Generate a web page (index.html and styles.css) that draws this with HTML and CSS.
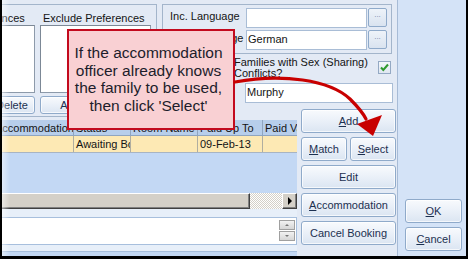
FILE: index.html
```html
<!DOCTYPE html>
<html>
<head>
<meta charset="utf-8">
<title>Booking</title>
<link rel="stylesheet" href="styles.css">
</head>
<body>
<div class="frame">
  <div class="main">
    <section class="prefs">
      <div class="prefs-inner">
        <div class="pref-col">
          <div class="pref-label">Include Preferences</div>
          <div class="listbox"></div>
          <div class="pref-btns"><div class="btn btn-add">Add</div><div class="btn btn-del">Delete</div></div>
        </div>
        <div class="pref-col">
          <div class="pref-label">Exclude Preferences</div>
          <div class="listbox"></div>
          <div class="pref-btns"><div class="btn btn-add">Add</div><div class="btn btn-del">Delete</div></div>
        </div>
      </div>
    </section>

    <section class="details">
      <div class="group">
        <div class="field-row"><span class="flabel">Inc. Language</span><div class="tbox"></div><div class="dots">...</div></div>
        <div class="field-row"><span class="flabel">Exc. Language</span><div class="tbox">German</div><div class="dots">...</div></div>
      </div>
      <div class="check-row">
        <div class="check-label">Families with Sex (Sharing)<br>Conflicts?</div>
        <div class="checkbox"><svg width="11" height="11" viewBox="0 0 11 11"><path d="M2 5.5 L4.3 8 L9 2.5" fill="none" stroke="#2f9a2f" stroke-width="2"/></svg></div>
      </div>
      <div class="family-row"><span class="flabel">Family</span><div class="tbox wide">Murphy</div></div>
    </section>

    <section class="actions">
      <div class="btn"><u>A</u>dd</div>
      <div class="pair"><div class="btn"><u>M</u>atch</div><div class="btn"><u>S</u>elect</div></div>
      <div class="btn">Edit</div>
      <div class="btn"><u>A</u>ccommodation</div>
      <div class="btn">Cancel Booking</div>
    </section>

    <section class="bookings">
      <div class="grid">
        <div class="grid-head">
          <div class="cell">Accommodation</div>
          <div class="cell">Status</div>
          <div class="cell">Room Name</div>
          <div class="cell">Paid Up To</div>
          <div class="cell">Paid Value</div>
        </div>
        <div class="grid-row">
          <div class="cell"></div>
          <div class="cell">Awaiting Booking</div>
          <div class="cell"></div>
          <div class="cell">09-Feb-13</div>
          <div class="cell"></div>
        </div>
      </div>
      <div class="hscroll">
        <div class="thumb"></div>
        <div class="track"></div>
        <div class="arrow-btn"><span class="tri-right"></span></div>
      </div>
      <div class="band"></div>
      <div class="notes">
        <div class="spin">
          <div class="spin-btn"><span class="tri-up"></span></div>
          <div class="spin-btn"><span class="tri-down"></span></div>
        </div>
      </div>
      <div class="band small"></div>
      <div class="base"></div>
    </section>
  </div>

  <aside class="dialog-btns">
    <div class="btn"><u>O</u>K</div>
    <div class="btn"><u>C</u>ancel</div>
  </aside>
</div>

<div class="fade"></div>

<div class="callout">If the accommodation<br>officer already knows<br>the family to be used,<br>then click 'Select'</div>

<svg class="arrow" width="468" height="259" viewBox="0 0 468 259">
  <path d="M235 82 C 282 73, 330 80, 350 99 C 358 107, 363 113, 366 119" fill="none" stroke="#c80000" stroke-width="3.2" stroke-linecap="round"/>
  <polygon points="357,124 382,115 373,136" fill="#c80000"/>
</svg>
</body>
</html>
```

FILE: styles.css
```css
* { box-sizing: border-box; }
html, body { margin: 0; padding: 0; }
body {
  width: 468px;
  height: 259px;
  position: relative;
  overflow: hidden;
  background: #000;
  font-family: "Liberation Sans", Arial, sans-serif;
  font-size: 11px;
  color: #141414;
}

.frame {
  display: flex;
  width: 468px;
  height: 259px;
  border-left: 2px solid #000;
  border-right: 2px solid #000;
  border-bottom: 3px solid #000;
  overflow: hidden;
  background: #e3eaf5;
}

.main {
  width: 395px;
  display: grid;
  grid-template-columns: 155px 5px 135px 3px 97px;
  grid-template-rows: 105px 12px 139px;
  background: #e3eaf5;
}

/* ---------- buttons ---------- */
.btn {
  display: flex;
  align-items: center;
  justify-content: center;
  height: 24px;
  border: 1px solid #8faaca;
  border-radius: 3px;
  background: linear-gradient(#f8fafd 0%, #eaf0f8 50%, #dbe5f2 100%);
  box-shadow: inset 0 0 0 1px rgba(255,255,255,0.7);
  color: #1c3050;
  white-space: nowrap;
}
.btn u { text-decoration: underline; text-underline-offset: 1px; }

/* ---------- preferences ---------- */
.prefs {
  grid-column: 1;
  grid-row: 1 / 3;
  margin-top: 4px;
  border-top: 1px solid #a3b5cb;
  border-right: 1px solid #a3b5cb;
  border-bottom: 1px solid #a3b5cb;
  padding-top: 7px;
  overflow: hidden;
}
.prefs-inner {
  display: flex;
  gap: 5px;
  margin-left: -78px;
}
.pref-col {
  width: 111px;
  flex: none;
  display: flex;
  flex-direction: column;
}
.pref-label {
  height: 13px;
  line-height: 13px;
  padding-left: 3px;
  white-space: nowrap;
}
.listbox {
  height: 68px;
  background: #fff;
  border: 1px solid #8d9aaa;
  border-top-color: #7c8896;
  border-left-color: #7c8896;
}
.pref-btns {
  display: flex;
  gap: 5px;
  margin-top: 3px;
}
.pref-btns .btn { height: 18px; }
.btn-add { width: 60px; }
.btn-del { width: 46px; }

/* ---------- details ---------- */
.details {
  grid-column: 3 / 6;
  grid-row: 1;
  display: flex;
  flex-direction: column;
}
.group {
  margin-top: 4px;
  margin-right: 5px;
  border: 1px solid #a3b5cb;
  padding: 3px 4px 3px 7px;
  display: flex;
  flex-direction: column;
  gap: 2px;
}
.field-row {
  display: flex;
  height: 20px;
}
.flabel {
  width: 76px;
  flex: none;
  padding-top: 2px;
  line-height: 13px;
  white-space: nowrap;
}
.tbox {
  width: 121px;
  height: 20px;
  background: #fff;
  border: 1px solid #a9bdd6;
  padding-left: 1px;
  line-height: 17px;
}
.dots {
  width: 19px;
  height: 19px;
  margin-left: 1px;
  border: 1px solid #8faaca;
  border-radius: 2px;
  background: linear-gradient(#eef3f9, #d9e3f0);
  color: #7088a8;
  font-size: 8px;
  line-height: 12px;
  text-align: center;
}
.check-row {
  display: flex;
  margin-top: 3px;
}
.check-label {
  margin-left: 72px;
  line-height: 10.5px;
  white-space: nowrap;
}
.checkbox {
  margin-left: auto;
  margin-right: 6px;
  margin-top: 4px;
  width: 13px;
  height: 13px;
  border: 1px solid #94a9c4;
  background: linear-gradient(#f4f7fb, #dfe7f1);
}
.checkbox svg { display: block; }
.family-row {
  display: flex;
  margin-top: 5px;
  height: 20px;
}
.family-row .flabel { width: 83px; padding-left: 8px; }
.tbox.wide { width: 148px; }

/* ---------- actions ---------- */
.actions {
  grid-column: 5;
  grid-row: 2 / 4;
  padding-top: 4px;
  padding-left: 1px;
  display: flex;
  flex-direction: column;
  gap: 4px;
}
.actions > .btn { width: 95px; }
.pair { display: flex; gap: 3px; }
.pair .btn { width: 46px; }

/* ---------- bookings grid ---------- */
.bookings {
  grid-column: 1 / 4;
  grid-row: 3;
  padding-top: 3px;
  display: flex;
  flex-direction: column;
  overflow: hidden;
}
.grid {
  height: 73px;
  background: #c3d8f4;
  overflow: hidden;
  flex: none;
}
.grid-head, .grid-row {
  display: grid;
  grid-template-columns: 81px 57px 67px 65px 70px;
  margin-left: -9px;
  width: 340px;
}
.cell {
  overflow: hidden;
  white-space: nowrap;
  padding-left: 2px;
  border-right: 1px solid #8fa5c0;
}
.grid-head {
  height: 16px;
  background: #b7ceeb;
  border-bottom: 1px solid #8fa5c0;
}
.grid-head .cell { padding-top: 2px; line-height: 13px; }
.grid-row {
  height: 17px;
  background: #fde9b4;
  border-bottom: 1px solid #a8b4c2;
}
.grid-row .cell { padding-top: 2px; line-height: 13px; border-right-color: #b0aea0; }

.hscroll {
  height: 16px;
  display: flex;
  flex: none;
}
.thumb {
  flex: 1;
  background: #d4d0c8;
  border-top: 1px solid #fff;
  border-right: 1px solid #404040;
  border-bottom: 1px solid #404040;
  box-shadow: inset -1px -1px 0 #808080;
}
.track {
  width: 32px;
  background: repeating-conic-gradient(#d4d0c8 0 25%, #ffffff 0 50%) 0 0 / 2px 2px;
}
.arrow-btn {
  width: 15px;
  background: #d4d0c8;
  border-top: 1px solid #fff;
  border-left: 1px solid #fff;
  border-right: 1px solid #404040;
  border-bottom: 1px solid #404040;
  box-shadow: inset -1px -1px 0 #808080;
  display: flex;
  align-items: center;
  justify-content: center;
}
.tri-right {
  width: 0; height: 0;
  border-top: 4px solid transparent;
  border-bottom: 4px solid transparent;
  border-left: 4px solid #000;
  margin-left: 1px;
}
.band {
  height: 9px;
  flex: none;
  background: #e7eff9;
  border-bottom: 1px solid #a7bfdd;
}
.band.small { height: 7px; }
.notes {
  height: 27px;
  flex: none;
  background: #fff;
  border-bottom: 1px solid #a7bfdd;
  border-right: 1px solid #a7bfdd;
  display: flex;
  justify-content: flex-end;
  padding: 2px 1px 0 0;
}
.spin {
  width: 16px;
  display: flex;
  flex-direction: column;
  gap: 1px;
}
.spin-btn {
  height: 10px;
  border: 1px solid #a0a0a0;
  background: linear-gradient(#f2f2f2, #d6d6d6);
  display: flex;
  align-items: center;
  justify-content: center;
}
.tri-up, .tri-down {
  width: 0; height: 0;
  border-left: 2px solid transparent;
  border-right: 2px solid transparent;
}
.tri-up { border-bottom: 2px solid #777; }
.tri-down { border-top: 2px solid #777; }
.base {
  flex: 1;
  background: #c3d8f4;
}

/* ---------- dialog buttons ---------- */
.dialog-btns {
  width: 69px;
  flex: none;
  border-left: 1px solid #a7bbd6;
  background: #d4e3f7;
  display: flex;
  flex-direction: column;
  justify-content: flex-end;
  gap: 4px;
  padding: 0 0 5px 7px;
}
.dialog-btns .btn { width: 57px; }

/* ---------- overlays ---------- */
.fade {
  position: absolute;
  left: 2px;
  top: 0;
  width: 8px;
  height: 256px;
  background: linear-gradient(to right, rgba(255,255,255,0.5), rgba(255,255,255,0));
  pointer-events: none;
}
.callout {
  position: absolute;
  left: 67px;
  top: 29px;
  width: 168px;
  height: 101px;
  background: #f9d0d3;
  border: 2px solid #c30a1e;
  padding: 13px 5px 0 0;
  text-align: center;
  font-size: 15.5px;
  line-height: 17.7px;
  color: #1d1d2b;
  white-space: nowrap;
}
.arrow {
  position: absolute;
  left: 0;
  top: 0;
  pointer-events: none;
}
```
